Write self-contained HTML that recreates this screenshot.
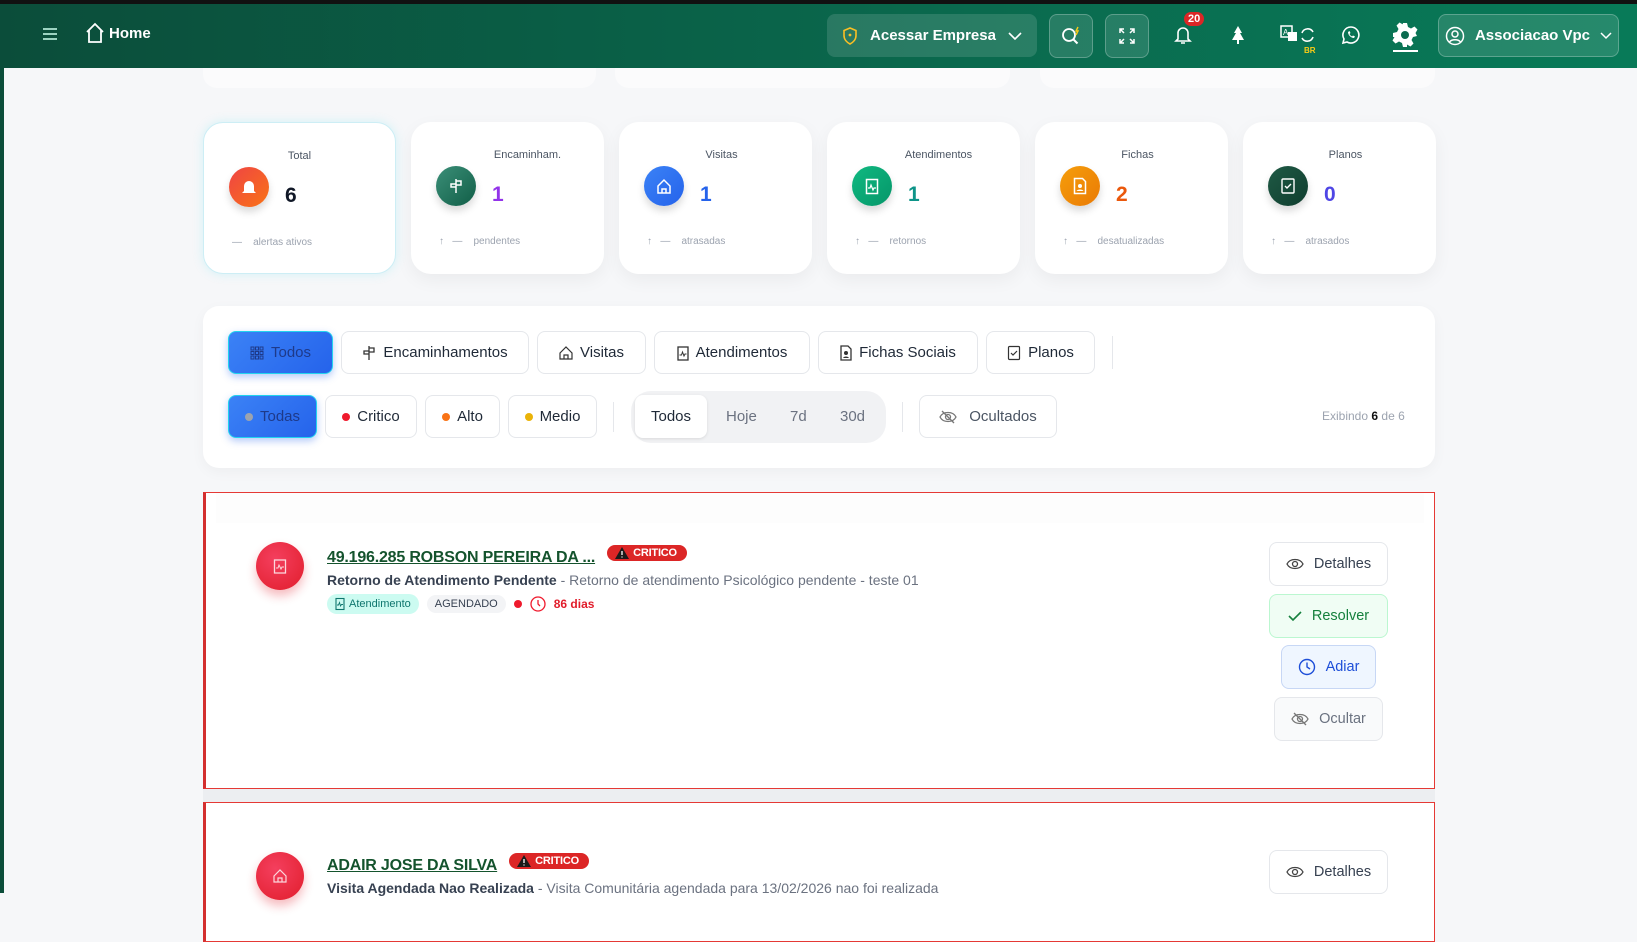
<!DOCTYPE html>
<html><head><meta charset="utf-8"><style>
*{box-sizing:border-box;margin:0;padding:0}
body{width:1637px;height:893px;overflow:hidden;background:#f6f7f9;font-family:"Liberation Sans",sans-serif;color:#1f2937;position:relative}
.hdr{position:absolute;left:0;top:0;width:1637px;height:68px;background:linear-gradient(90deg,#0b4d3a,#0a6a4e 60%,#087a58);border-top:4px solid #111;}
.lstrip{position:absolute;left:0;top:68px;width:4px;height:825px;background:#0b4d3a}
.ab{position:absolute;display:flex;align-items:center;justify-content:center;color:#fff}
.gbtn{background:rgba(255,255,255,.12);border:1px solid rgba(255,255,255,.25);border-radius:8px}
.card{position:absolute;top:122px;width:193px;height:152px;background:#fff;border-radius:20px;box-shadow:0 6px 18px rgba(0,0,0,.05)}
.card .t{position:absolute;top:27px;width:100%;text-align:center;font-size:11px;color:#4b5563;padding-left:12px}
.card .ic{position:absolute;left:25px;top:44px;width:40px;height:40px;border-radius:50%;display:flex;align-items:center;justify-content:center;box-shadow:0 5px 8px rgba(0,0,0,.15)}
.card .n{position:absolute;left:81px;top:61px;font-size:21px;font-weight:bold}
.card .f{position:absolute;left:28px;top:114px;font-size:10px;color:#9ca3af}
.panel{position:absolute;left:203px;top:306px;width:1232px;height:162px;background:#fff;border-radius:16px;box-shadow:0 4px 14px rgba(0,0,0,.04)}
.b{position:absolute;height:43px;border:1px solid #e5e7eb;border-radius:8px;background:#fff;display:flex;align-items:center;justify-content:center;gap:7px;font-size:15px;color:#1f2937}
.b.act{background:linear-gradient(135deg,#3b82f6,#2563eb);border:1px solid #22d3ee;color:#1e3a8a;box-shadow:0 3px 8px rgba(37,99,235,.35)}
.dot{width:8px;height:8px;border-radius:50%;display:inline-block}
.alert{position:absolute;left:203px;width:1232px;background:#fff;border:1px solid #e53935;border-left:3px solid #d32f2f}
.av{position:absolute;left:50px;width:48px;height:48px;border-radius:50%;background:radial-gradient(circle at 40% 35%,#f43f5e,#e11d2b);display:flex;align-items:center;justify-content:center;box-shadow:0 6px 10px rgba(225,29,43,.3)}
.ttl{position:absolute;left:121px;font-size:16px;color:#14532d;text-decoration:underline;font-weight:bold;letter-spacing:-.2px}
.crit{display:inline-flex;align-items:center;gap:4px;background:#dc2626;color:#fff;font-size:11px;font-weight:bold;border-radius:10px;padding:2px 10px 2px 8px;margin-left:12px;text-decoration:none;vertical-align:3px}
.sub{position:absolute;left:121px;font-size:14px;color:#6b7280}
.sub b{color:#374151}
.ob{position:absolute;height:44px;border:1px solid #e5e7eb;border-radius:8px;background:#fff;display:flex;align-items:center;justify-content:center;gap:10px;font-size:14.5px;color:#374151}
</style></head><body>
<div class="hdr"></div>
<div class="lstrip"></div>
<div class="ab" style="left:40px;top:24px;width:20px;height:20px"><svg width="16" height="14"><path d="M1 2h14M1 7h14M1 12h14" stroke="#cfe" stroke-width="1.6"/></svg></div>
<div class="ab" style="left:84px;top:22px;gap:3px;font-weight:bold;font-size:15px"><svg width="22" height="22" viewBox="0 0 22 22"><path d="M3 10L11 2l8 8M5 8v12h12V8" fill="none" stroke="#fff" stroke-width="1.8"/></svg>Home</div>
<div class="ab gbtn" style="left:827px;top:14px;width:210px;height:43px;gap:12px;font-weight:bold;font-size:15px;border:none;background:rgba(255,255,255,.13)"><svg width="16" height="18" viewBox="0 0 16 18"><path d="M8 1l6 2.5v5c0 4-3 7-6 8.5-3-1.5-6-4.5-6-8.5v-5z" fill="none" stroke="#fbbf24" stroke-width="1.6"/><circle cx="8" cy="8" r="1.4" fill="#fbbf24"/></svg>Acessar Empresa <svg width="14" height="8"><path d="M1 1l6 6 6-6" fill="none" stroke="#fff" stroke-width="1.6"/></svg></div>
<div class="ab gbtn" style="left:1049px;top:14px;width:44px;height:44px"><svg width="22" height="22"><circle cx="9" cy="10" r="6" fill="none" stroke="#fff" stroke-width="1.8"/><path d="M13.5 14.5l4 4" stroke="#fff" stroke-width="2"/><path d="M18 2l-2 4h2l-2 4" stroke="#facc15" stroke-width="1.4" fill="none"/></svg></div>
<div class="ab gbtn" style="left:1105px;top:14px;width:44px;height:44px"><svg width="18" height="18"><path d="M2 6V2h4M2 2l4 4M16 6V2h-4M16 2l-4 4M2 12v4h4M2 16l4-4M16 12v4h-4M16 16l-4-4" fill="none" stroke="#fff" stroke-width="1.5"/></svg></div>
<div class="ab" style="left:1172px;top:24px;width:22px;height:22px"><svg width="18" height="20"><path d="M4 14V8a5 5 0 0110 0v6l2 2H2zM7 18h4" fill="none" stroke="#fff" stroke-width="1.6"/></svg></div>
<div class="ab" style="left:1184px;top:12px;background:#dc2626;border-radius:8px;font-size:11px;font-weight:bold;padding:0 4px;height:14px">20</div>
<div class="ab" style="left:1228px;top:24px;width:20px;height:22px"><svg width="14" height="20"><path d="M7 1l4 7H9l4 7H8v4H6v-4H1l4-7H3z" fill="#fff"/></svg></div>
<div class="ab" style="left:1280px;top:24px;width:34px;height:22px"><svg width="34" height="22"><rect x="1" y="2" width="11" height="11" fill="none" stroke="#fff" stroke-width="1.5"/><text x="3" y="11" font-size="8" fill="#fff" font-family="Liberation Sans">A</text><rect x="8" y="8" width="9" height="9" fill="#fff"/><path d="M22 9a6 6 0 0111-1M33 13a6 6 0 01-11 1" fill="none" stroke="#fff" stroke-width="1.6"/></svg></div>
<div class="ab" style="left:1304px;top:46px;font-size:8px;color:#facc15;font-weight:bold">BR</div>
<div class="ab" style="left:1340px;top:24px;width:22px;height:22px"><svg width="20" height="20"><path d="M10 2a8 8 0 00-7 12l-1 4 4-1a8 8 0 104-15z" fill="none" stroke="#fff" stroke-width="1.6"/><path d="M7 7c0 3 3 6 6 6l1-1.5-2-1-1 1c-1-.5-2-1.5-2.5-2.5l1-1-1-2z" fill="#fff"/></svg></div>
<div class="ab" style="left:1392px;top:22px;width:26px;height:26px"><svg width="26" height="26" viewBox="0 0 26 26"><path d="M11 1h4l1 4 3 1.5 3.5-2 3 3-2 3.5L25 14l-0 0 0 0-4 1-1.5 3 2 3.5-3 3-3.5-2L15 25h-4l-1-4-3-1.5-3.5 2-3-3 2-3.5L1 15v-4l4-1 1.5-3-2-3.5 3-3 3.5 2L10 5z" fill="#fff"/><circle cx="13" cy="13" r="4" fill="#0a6a4e"/></svg></div>
<div class="ab" style="left:1393px;top:50px;width:25px;height:2px;background:#fff"></div>
<div class="ab gbtn" style="left:1438px;top:14px;width:181px;height:43px;gap:10px;font-weight:bold;font-size:15px"><svg width="20" height="20"><circle cx="10" cy="10" r="8.5" fill="none" stroke="#fff" stroke-width="1.5"/><circle cx="10" cy="8" r="3" fill="none" stroke="#fff" stroke-width="1.5"/><path d="M4.5 16c2-3 9-3 11 0" fill="none" stroke="#fff" stroke-width="1.5"/></svg>Associacao Vpc <svg width="12" height="8"><path d="M1 1l5 5 5-5" fill="none" stroke="#fff" stroke-width="1.5"/></svg></div>

<div style="position:absolute;left:203px;top:68px;width:393px;height:20px;background:#fbfbfc;border-radius:0 0 14px 14px"></div>
<div style="position:absolute;left:615px;top:68px;width:395px;height:20px;background:#fbfbfc;border-radius:0 0 14px 14px"></div>
<div style="position:absolute;left:1040px;top:68px;width:395px;height:20px;background:#fbfbfc;border-radius:0 0 14px 14px"></div>

<div class="card" style="left:203px;border:1.5px solid #cdeef5;box-shadow:0 0 10px rgba(103,232,249,.25)"><div class="t" style="padding-left:0">Total</div><div class="ic" style="background:linear-gradient(135deg,#ef4444,#f97316)"><svg width="16" height="18"><path d="M3 13V8a5 5 0 0110 0v5l2 2H1zM6 16h4" fill="#fff"/></svg></div><div class="n" style="color:#111827">6</div><div class="f">—&nbsp;&nbsp;&nbsp;&nbsp;alertas ativos</div></div>
<div class="card" style="left:411px"><div class="t" style="padding-left:40px">Encaminham.</div><div class="ic" style="background:linear-gradient(135deg,#3b8f78,#115e47)"><svg width="16" height="18"><path d="M8 2v14M8 4h5v4H8M8 7H3v3h5" fill="none" stroke="#fff" stroke-width="1.5"/></svg></div><div class="n" style="color:#9333ea">1</div><div class="f">↑&nbsp;&nbsp;&nbsp;—&nbsp;&nbsp;&nbsp;&nbsp;pendentes</div></div>
<div class="card" style="left:619px"><div class="t">Visitas</div><div class="ic" style="background:linear-gradient(135deg,#3b82f6,#2563eb)"><svg width="16" height="16"><path d="M2 8l6-6 6 6v7H2z M6 15v-4h4v4" fill="none" stroke="#fff" stroke-width="1.5"/></svg></div><div class="n" style="color:#2563eb">1</div><div class="f">↑&nbsp;&nbsp;&nbsp;—&nbsp;&nbsp;&nbsp;&nbsp;atrasadas</div></div>
<div class="card" style="left:827px"><div class="t" style="padding-left:30px">Atendimentos</div><div class="ic" style="background:linear-gradient(135deg,#10b981,#059669)"><svg width="14" height="18"><rect x="1.5" y="2.5" width="11" height="14" fill="none" stroke="#fff" stroke-width="1.5"/><path d="M3 11h2l1-3 2 5 1-2h2" fill="none" stroke="#fff" stroke-width="1.2"/></svg></div><div class="n" style="color:#0d9488">1</div><div class="f">↑&nbsp;&nbsp;&nbsp;—&nbsp;&nbsp;&nbsp;&nbsp;retornos</div></div>
<div class="card" style="left:1035px"><div class="t">Fichas</div><div class="ic" style="background:linear-gradient(135deg,#f59e0b,#ea7a05)"><svg width="14" height="18"><path d="M1.5 1.5h8l3 3v12h-11z" fill="none" stroke="#fff" stroke-width="1.5"/><circle cx="7" cy="9" r="2" fill="#fff"/><path d="M3.5 14c1-2 6-2 7 0" fill="#fff"/></svg></div><div class="n" style="color:#ea580c">2</div><div class="f">↑&nbsp;&nbsp;&nbsp;—&nbsp;&nbsp;&nbsp;&nbsp;desatualizadas</div></div>
<div class="card" style="left:1243px"><div class="t">Planos</div><div class="ic" style="background:linear-gradient(135deg,#1f5a45,#0f3d2e)"><svg width="16" height="18"><rect x="2" y="2" width="12" height="14" rx="1" fill="none" stroke="#fff" stroke-width="1.4"/><path d="M5 9l2 2 4-4" fill="none" stroke="#fff" stroke-width="1.4"/></svg></div><div class="n" style="color:#4f46e5">0</div><div class="f">↑&nbsp;&nbsp;&nbsp;—&nbsp;&nbsp;&nbsp;&nbsp;atrasados</div></div>

<div class="panel"></div>
<div class="b act" style="left:228px;top:331px;width:105px"><svg width="14" height="14"><g fill="none" stroke="#1e3a8a" stroke-width="1"><rect x="1" y="1" width="3" height="3"/><rect x="5.5" y="1" width="3" height="3"/><rect x="10" y="1" width="3" height="3"/><rect x="1" y="5.5" width="3" height="3"/><rect x="5.5" y="5.5" width="3" height="3"/><rect x="10" y="5.5" width="3" height="3"/><rect x="1" y="10" width="3" height="3"/><rect x="5.5" y="10" width="3" height="3"/><rect x="10" y="10" width="3" height="3"/></g></svg>Todos</div>
<div class="b" style="left:341px;top:331px;width:188px"><svg width="14" height="16"><path d="M7 1v14M7 3h5v4H7M7 6H2v3h5" fill="none" stroke="#333" stroke-width="1.3"/></svg>Encaminhamentos</div>
<div class="b" style="left:537px;top:331px;width:109px"><svg width="14" height="14"><path d="M1 7l6-6 6 6v6H1z M5 13v-4h4v4" fill="none" stroke="#333" stroke-width="1.2"/></svg>Visitas</div>
<div class="b" style="left:654px;top:331px;width:156px"><svg width="12" height="16"><rect x="1" y="2" width="10" height="13" fill="none" stroke="#333" stroke-width="1.3"/><path d="M2.5 10h2l1-3 1.5 4 1-2h1.5" fill="none" stroke="#333" stroke-width="1"/></svg>Atendimentos</div>
<div class="b" style="left:818px;top:331px;width:160px"><svg width="12" height="16"><path d="M1 1h7l3 3v11H1z" fill="none" stroke="#333" stroke-width="1.3"/><circle cx="6" cy="8" r="2" fill="#333"/><path d="M3 13c1-2 5-2 6 0" fill="#333"/></svg>Fichas Sociais</div>
<div class="b" style="left:986px;top:331px;width:109px"><svg width="14" height="16"><rect x="1.5" y="1.5" width="11" height="13" rx="1" fill="none" stroke="#333" stroke-width="1.2"/><path d="M4 8l2 2 4-4" fill="none" stroke="#333" stroke-width="1.2"/></svg>Planos</div>
<div style="position:absolute;left:1112px;top:336px;width:1px;height:33px;background:#e5e7eb"></div>

<div class="b act" style="left:228px;top:395px;width:89px"><span class="dot" style="background:#9ca3af"></span>Todas</div>
<div class="b" style="left:325px;top:395px;width:92px"><span class="dot" style="background:#ef1a2d"></span>Critico</div>
<div class="b" style="left:425px;top:395px;width:75px"><span class="dot" style="background:#f97316"></span>Alto</div>
<div class="b" style="left:508px;top:395px;width:89px"><span class="dot" style="background:#eab308"></span>Medio</div>
<div style="position:absolute;left:613px;top:402px;width:1px;height:30px;background:#e5e7eb"></div>
<div style="position:absolute;left:631px;top:391px;width:255px;height:52px;background:#f1f2f4;border-radius:20px"></div>
<div class="b" style="left:635px;top:395px;width:72px;border:none;box-shadow:0 1px 3px rgba(0,0,0,.1)">Todos</div>
<div style="position:absolute;left:726px;top:408px;font-size:15px;color:#6b7280">Hoje</div>
<div style="position:absolute;left:790px;top:408px;font-size:15px;color:#6b7280">7d</div>
<div style="position:absolute;left:840px;top:408px;font-size:15px;color:#6b7280">30d</div>
<div style="position:absolute;left:902px;top:402px;width:1px;height:30px;background:#e5e7eb"></div>
<div class="b" style="left:919px;top:395px;width:138px;color:#4b5563;gap:12px"><svg width="18" height="14"><path d="M1 7c3-6 13-6 16 0-3 6-13 6-16 0z" fill="none" stroke="#777" stroke-width="1.3"/><circle cx="9" cy="7" r="2.5" fill="none" stroke="#777" stroke-width="1.3"/><path d="M3 1l12 12" stroke="#777" stroke-width="1.3"/></svg>Ocultados</div>
<div style="position:absolute;left:1322px;top:409px;font-size:12px;color:#9ca3af">Exibindo <b style="color:#111">6</b> de 6</div>

<div class="alert" style="top:492px;height:297px">
  <div style="position:absolute;left:10px;right:10px;top:0;height:30px;background:#fdfdfd"></div>
  <div class="av" style="top:49px"><svg width="14" height="16"><rect x="1.5" y="2" width="11" height="13" fill="none" stroke="#fff" stroke-width="1.3" opacity=".8"/><path d="M3 10h2l1-3 2 4 1-2h2" fill="none" stroke="#fff" stroke-width="1" opacity=".8"/></svg></div>
  <div class="ttl" style="top:52px">49.196.285 ROBSON PEREIRA DA ...<span class="crit"><svg width="14" height="12"><path d="M7 0l7 12H0z" fill="#1a1a1a"/><path d="M7 4v4M7 9.5v1" stroke="#fff" stroke-width="1.3"/></svg>CRITICO</span></div>
  <div class="sub" style="top:79px"><b>Retorno de Atendimento Pendente</b> - Retorno de atendimento Psicológico pendente - teste 01</div>
  <div style="position:absolute;left:121px;top:101px;display:flex;align-items:center;gap:8px;font-size:11px">
    <span style="background:#ccfbf1;color:#0f766e;border-radius:10px;padding:3px 8px;display:flex;gap:4px;align-items:center"><svg width="10" height="14"><rect x="1" y="1.5" width="8" height="11" fill="none" stroke="#0f766e" stroke-width="1.1"/><path d="M2 8h1.5l1-2.5 1 3.5 1-1.5H8" fill="none" stroke="#0f766e" stroke-width=".9"/></svg>Atendimento</span>
    <span style="background:#f3f4f6;color:#374151;border-radius:10px;padding:3px 8px">AGENDADO</span>
    <span class="dot" style="background:#ef1a2d"></span>
    <svg width="16" height="16"><circle cx="8" cy="8" r="7" fill="none" stroke="#ef1a2d" stroke-width="1.3"/><path d="M8 4v4l2 2" fill="none" stroke="#ef1a2d" stroke-width="1.3"/></svg>
    <span style="color:#e11d2b;font-weight:bold;font-size:12px">86 dias</span>
  </div>
  <div class="ob" style="left:1063px;top:49px;width:119px"><svg width="18" height="14"><path d="M1 7c3-6 13-6 16 0-3 6-13 6-16 0z" fill="none" stroke="#444" stroke-width="1.3"/><circle cx="9" cy="7" r="2.5" fill="none" stroke="#444" stroke-width="1.3"/></svg>Detalhes</div>
  <div class="ob" style="left:1063px;top:101px;width:119px;background:#f0fdf4;border-color:#bbf7d0;color:#15803d"><svg width="14" height="12"><path d="M1 6l4 4 8-8" fill="none" stroke="#15803d" stroke-width="1.6"/></svg>Resolver</div>
  <div class="ob" style="left:1075px;top:152px;width:95px;background:#eff6ff;border-color:#c7d7f5;color:#1d4ed8"><svg width="18" height="18"><circle cx="9" cy="9" r="7.5" fill="none" stroke="#1d4ed8" stroke-width="1.4"/><path d="M9 4.5V9l3 2" fill="none" stroke="#1d4ed8" stroke-width="1.4"/></svg>Adiar</div>
  <div class="ob" style="left:1068px;top:204px;width:109px;background:#f9fafb;color:#6b7280"><svg width="18" height="14"><path d="M1 7c3-6 13-6 16 0-3 6-13 6-16 0z" fill="none" stroke="#777" stroke-width="1.3"/><circle cx="9" cy="7" r="2.5" fill="none" stroke="#777" stroke-width="1.3"/><path d="M3 1l12 12" stroke="#777" stroke-width="1.3"/></svg>Ocultar</div>
</div>
<div style="position:absolute;left:203px;top:789px;width:1232px;height:13px;background:#eceef1"></div>
<div class="alert" style="top:802px;height:140px">
  <div class="av" style="top:49px"><svg width="14" height="14"><path d="M1 7l6-6 6 6v6H1z M5 13v-4h4v4" fill="none" stroke="#fff" stroke-width="1.2" opacity=".8"/></svg></div>
  <div class="ttl" style="top:50px">ADAIR JOSE DA SILVA<span class="crit"><svg width="14" height="12"><path d="M7 0l7 12H0z" fill="#1a1a1a"/><path d="M7 4v4M7 9.5v1" stroke="#fff" stroke-width="1.3"/></svg>CRITICO</span></div>
  <div class="sub" style="top:77px"><b>Visita Agendada Nao Realizada</b> - Visita Comunitária agendada para 13/02/2026 nao foi realizada</div>
  <div class="ob" style="left:1063px;top:47px;width:119px"><svg width="18" height="14"><path d="M1 7c3-6 13-6 16 0-3 6-13 6-16 0z" fill="none" stroke="#444" stroke-width="1.3"/><circle cx="9" cy="7" r="2.5" fill="none" stroke="#444" stroke-width="1.3"/></svg>Detalhes</div>
</div>
</body></html>
